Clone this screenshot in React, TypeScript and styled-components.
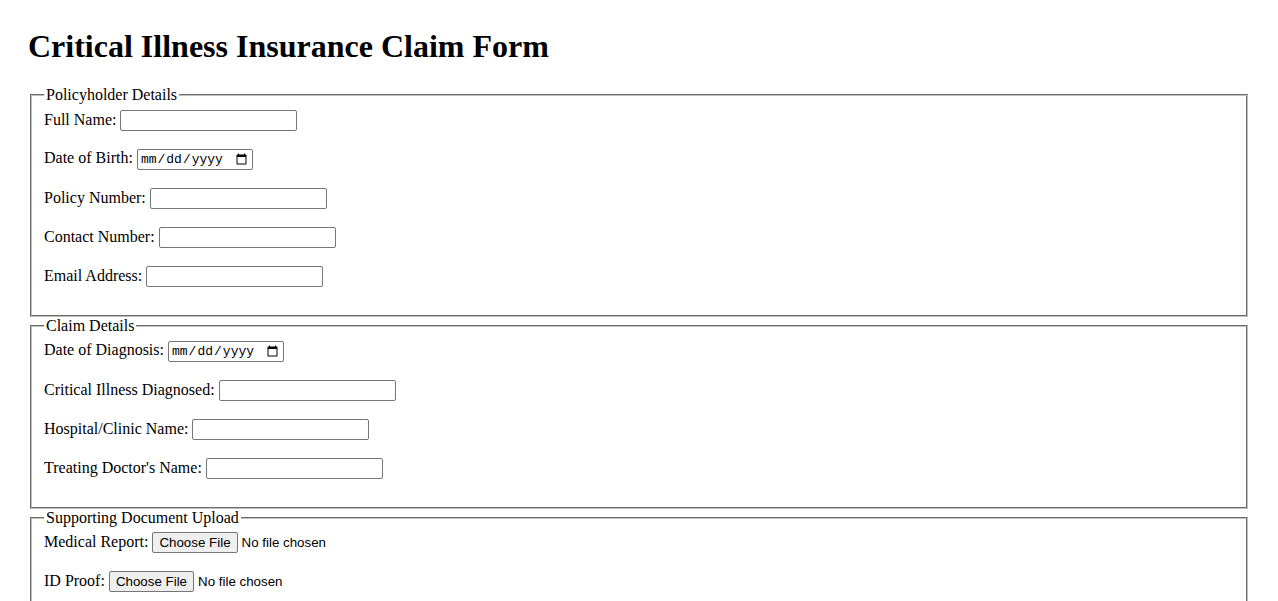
import styled, { createGlobalStyle } from "styled-components";

const GlobalStyle = createGlobalStyle`
  body {
    margin: 0;
    background: #ffffff;
    color: #000000;
    font-family: "Liberation Serif", "Times New Roman", serif;
    font-size: 16px;
  }
`;

const Page = styled.div`
  padding: 28px;
`;

const Title = styled.h1`
  font-size: 2em;
  font-weight: bold;
  margin: 0 0 0.67em;
`;

const Section = styled.fieldset`
  margin: 0 2px;
  padding: 0.35em 0.75em 0.625em;
  border: 2px groove #c0c0c0;
`;

const Legend = styled.legend`
  padding: 0 2px;
`;

const FieldLabel = styled.label`
  font: inherit;
`;

const TextInput = styled.input`
  box-sizing: border-box;
  width: 177px;
  height: 21px;
  margin: 0;
  padding: 1px 2px;
  border: 1px solid #767676;
  border-radius: 2px;
  font: 13.33px "Liberation Sans", Arial, sans-serif;
  vertical-align: baseline;
`;

const DateInput = styled(TextInput)`
  width: 116px;
  font-family: "Liberation Mono", "Courier New", monospace;
  font-size: 13px;
`;

const FileInput = styled.input`
  margin: 0;
  font: 13.33px "Liberation Sans", Arial, sans-serif;

  &::file-selector-button {
    font: inherit;
    margin: 0 4px 0 0;
    padding: 2px 6px;
    border: 1px solid #767676;
    border-radius: 2px;
    background: #efefef;
    color: #000;
  }
`;

type Field = { id: string; label: string; kind: "text" | "date" | "file" };

const sections: { legend: string; fields: Field[] }[] = [
  {
    legend: "Policyholder Details",
    fields: [
      { id: "fullName", label: "Full Name:", kind: "text" },
      { id: "dob", label: "Date of Birth:", kind: "date" },
      { id: "policyNumber", label: "Policy Number:", kind: "text" },
      { id: "contactNumber", label: "Contact Number:", kind: "text" },
      { id: "email", label: "Email Address:", kind: "text" },
    ],
  },
  {
    legend: "Claim Details",
    fields: [
      { id: "diagnosisDate", label: "Date of Diagnosis:", kind: "date" },
      { id: "illness", label: "Critical Illness Diagnosed:", kind: "text" },
      { id: "hospital", label: "Hospital/Clinic Name:", kind: "text" },
      { id: "doctor", label: "Treating Doctor's Name:", kind: "text" },
    ],
  },
  {
    legend: "Supporting Document Upload",
    fields: [
      { id: "medicalReport", label: "Medical Report:", kind: "file" },
      { id: "idProof", label: "ID Proof:", kind: "file" },
      { id: "hospitalBills", label: "Hospital Bills:", kind: "file" },
    ],
  },
];

const renderInput = (field: Field) => {
  if (field.kind === "date") return <DateInput type="date" id={field.id} />;
  if (field.kind === "file") return <FileInput type="file" id={field.id} />;
  return <TextInput type="text" id={field.id} />;
};

const App = () => (
  <>
    <GlobalStyle />
    <Page>
      <Title>Critical Illness Insurance Claim Form</Title>
      <form>
        {sections.map((section) => (
          <Section key={section.legend}>
            <Legend>{section.legend}</Legend>
            {section.fields.map((field) => (
              <span key={field.id}>
                <FieldLabel htmlFor={field.id}>{field.label}</FieldLabel>{" "}
                {renderInput(field)}
                <br />
                <br />
              </span>
            ))}
          </Section>
        ))}
      </form>
    </Page>
  </>
);

export default App;
